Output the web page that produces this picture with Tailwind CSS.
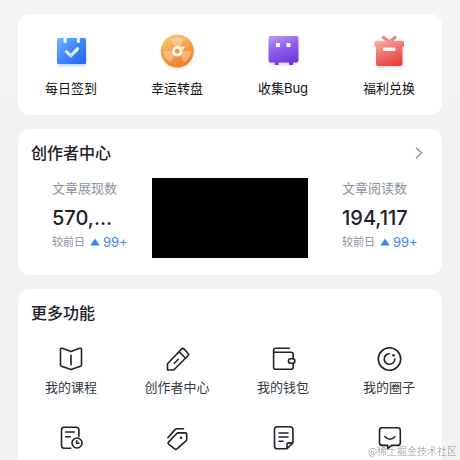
<!DOCTYPE html>
<html lang="zh-CN">
<head>
  <meta charset="UTF-8" />
  <meta name="viewport" content="width=device-width, initial-scale=1" />
  <title>我的</title>
  <!-- Tailwind -->
  <script src="https://cdn.jsdelivr.net/npm/@tailwindcss/browser@4"></script>
</head>
<body class="h-screen overflow-hidden bg-linear-to-b from-[#f5f5f6] to-[#f1f2f4] to-30% font-['Inter','Noto_Sans_CJK_SC',sans-serif] text-[#1d2129]">
<main class="flex flex-col gap-[14px] px-[18px] pt-[14px]">

  <!-- SHORTCUTS -->
  <nav class="grid grid-cols-4 rounded-xl bg-white pt-[19px] pb-[17px] text-[13px] leading-5 text-[#111]">
    <a href="#" class="flex flex-col items-center gap-[9px]">
      <svg class="size-9 overflow-visible" viewBox="0 0 36 36" fill="none">
        <defs>
          <linearGradient id="blue" x1="0" y1="0" x2="1" y2="1"><stop stop-color="#72b5fd"/><stop offset=".5" stop-color="#3f86fa"/><stop offset="1" stop-color="#2864f2"/></linearGradient>
          <linearGradient id="check" x1="0" y1="0" x2="0" y2="1"><stop stop-color="#fff"/><stop offset="1" stop-color="#c5d9ff"/></linearGradient>
          <filter id="glow" x="-30%" y="-30%" width="160%" height="160%"><feGaussianBlur stdDeviation="1.5"/></filter>
        </defs>
        <rect x="5" y="8" width="28" height="25" rx="2" fill="#5b93ff" opacity=".4" filter="url(#glow)"/>
        <rect x="4" y="5" width="29" height="26" rx="1.5" fill="url(#blue)"/>
        <rect x="10.5" y="3" width="3.3" height="7" rx="1.2" fill="#e4efff"/>
        <rect x="23.7" y="3" width="3.3" height="7" rx="1.2" fill="#e4efff"/>
        <path d="M13.5 18.8l4.3 4 6.7-7" stroke="url(#check)" stroke-width="3.2" stroke-linecap="round" stroke-linejoin="round"/>
      </svg>
      每日签到
    </a>
    <a href="#" class="flex flex-col items-center gap-[9px]">
      <svg class="size-9 overflow-visible" viewBox="0 0 36 36" fill="none">
        <defs>
          <linearGradient id="orange" x1=".3" y1="0" x2=".7" y2="1"><stop stop-color="#f8c777"/><stop offset=".5" stop-color="#f39a43"/><stop offset="1" stop-color="#ed7f2c"/></linearGradient>
        </defs>
        <circle cx="18.3" cy="20" r="15.5" fill="#f5a04e" opacity=".4" filter="url(#glow)"/>
        <circle cx="18.3" cy="18" r="16.5" fill="url(#orange)"/>
        <g fill="#fff" opacity=".32">
          <path d="M18.3 18L11.7 6.2Q18.3 2.8 24.9 6.2z"/>
          <path d="M18.3 18L11.7 6.2Q18.3 2.8 24.9 6.2z" transform="rotate(120 18.3 18)"/>
          <path d="M18.3 18L11.7 6.2Q18.3 2.8 24.9 6.2z" transform="rotate(240 18.3 18)"/>
        </g>
        <path d="M19 12.9l3 .8 4.2-.8-1.8 3.4-2 2z" fill="#fff3e2"/>
        <circle cx="18.2" cy="18.2" r="3.8" fill="#f09645" stroke="#fff3e2" stroke-width="2.8"/>
      </svg>
      幸运转盘
    </a>
    <a href="#" class="flex flex-col items-center gap-[9px]">
      <svg class="size-9 overflow-visible" viewBox="0 0 36 36" fill="none">
        <defs>
          <linearGradient id="purple" x1=".15" y1="0" x2=".5" y2="1"><stop stop-color="#b397f3"/><stop offset=".5" stop-color="#8a5ce9"/><stop offset="1" stop-color="#7138df"/></linearGradient>
        </defs>
        <rect x="5" y="8" width="27" height="24" rx="2" fill="#9a72ef" opacity=".3" filter="url(#glow)"/>
        <path d="M5.5 3H31.5a2 2 0 0 1 2 2V27.5a2 2 0 0 1-2 2H28V32H24V29.5H13.7V32H9.7V29.5H5.5a2 2 0 0 1-2-2V5a2 2 0 0 1 2-2z" fill="url(#purple)"/>
        <rect x="11" y="10" width="4" height="4" fill="#f7f2ff"/>
        <rect x="21.5" y="10" width="4" height="4" fill="#f7f2ff"/>
      </svg>
      收集Bug
    </a>
    <a href="#" class="flex flex-col items-center gap-[9px]">
      <svg class="size-9 overflow-visible" viewBox="0 0 36 36" fill="none">
        <defs>
          <linearGradient id="red" x1=".15" y1="0" x2=".6" y2="1"><stop stop-color="#f6aca5"/><stop offset=".5" stop-color="#ef6e6b"/><stop offset="1" stop-color="#e94340"/></linearGradient>
        </defs>
        <rect x="6" y="11" width="25" height="23" rx="2" fill="#f37a76" opacity=".3" filter="url(#glow)"/>
        <path d="M17 8L12.5 4.5M19.5 8L24 4.5" stroke="#f08580" stroke-width="3.4" stroke-linecap="round"/>
        <path d="M5 7.7H31.5a1.5 1.5 0 0 1 1.5 1.5V12.5a1.5 1.5 0 0 1-1.5 1.5V31a2 2 0 0 1-2 2H7a2 2 0 0 1-2-2V14a1.5 1.5 0 0 1-1.5-1.5V9.2a1.5 1.5 0 0 1 1.5-1.5z" fill="url(#red)"/>
        <rect x="12" y="14.5" width="12.5" height="3.5" rx=".5" fill="#fff4f2"/>
      </svg>
      福利兑换
    </a>
  </nav>

  <!-- CREATOR CENTER -->
  <section class="rounded-xl bg-white pt-3 pb-[17px]">
    <div class="flex items-center justify-between pr-[19px] pl-[13px]">
      <h2 class="text-base leading-6 font-medium">创作者中心</h2>
      <a href="#" aria-label="查看更多">
        <svg class="h-3 w-2" viewBox="0 0 8 12" fill="none" stroke="#8a909c" stroke-width="1.3"><path d="M1 .8L6.5 6 1 11.2"/></svg>
      </a>
    </div>
    <div class="mt-[13px] grid grid-cols-[1fr_156px_1fr]">
      <div class="pl-[34px]">
        <p class="text-[13px] leading-5 text-[#8a919f]">文章展现数</p>
        <p class="mt-1 text-xl leading-8 font-medium">570,...</p>
        <p class="flex items-center text-[11px] leading-4 text-[#8a919f]">较前日
          <svg class="mr-[3px] ml-[5px] h-2 w-[10px]" viewBox="0 0 10 8" fill="#3e82f7"><path d="M5 .5L9.8 7.5H.2z"/></svg>
          <span class="text-[13px] text-[#3e82f7]">99+</span>
        </p>
      </div>
      <div class="bg-black"></div>
      <div class="pb-2 pl-[34px]">
        <p class="text-[13px] leading-5 text-[#8a919f]">文章阅读数</p>
        <p class="mt-1 text-xl leading-8 font-medium">194,117</p>
        <p class="flex items-center text-[11px] leading-4 text-[#8a919f]">较前日
          <svg class="mr-[3px] ml-[5px] h-2 w-[10px]" viewBox="0 0 10 8" fill="#3e82f7"><path d="M5 .5L9.8 7.5H.2z"/></svg>
          <span class="text-[13px] text-[#3e82f7]">99+</span>
        </p>
      </div>
    </div>
  </section>

  <!-- MORE -->
  <section class="rounded-xl bg-white pt-3 pb-5">
    <h2 class="pl-[13px] text-base leading-6 font-medium">更多功能</h2>
    <div class="mt-[22px] grid grid-cols-4 gap-y-[29px] text-[13px] leading-5 text-[#333842]">
      <a href="#" class="flex flex-col items-center gap-[6px]">
        <svg class="size-6 overflow-visible" viewBox="0 0 24 24" fill="none" stroke="#1d2129" stroke-width="1.6" stroke-linecap="round" stroke-linejoin="round">
          <path d="M12 4.5L3.3 1.3Q1.5.8 1.5 2.5V18Q1.5 19 2.5 19.3L12 22.5l9.5-3.2Q22.5 19 22.5 18V2.5Q22.5.8 20.7 1.3zM12 8.3V17.7"/>
        </svg>
        我的课程
      </a>
      <a href="#" class="flex flex-col items-center gap-[6px]">
        <svg class="size-6 overflow-visible" viewBox="0 0 24 24" fill="none" stroke="#1d2129" stroke-width="1.6" stroke-linecap="round" stroke-linejoin="round">
          <path d="M2.5 23V16.7L16.5 2.1Q17.8.8 19.1 2.1L23 6.2Q24.2 7.5 23 8.8L8.7 23zM14.2 4.7L20.3 11M9.3 16.3l4-4"/>
        </svg>
        创作者中心
      </a>
      <a href="#" class="flex flex-col items-center gap-[6px]">
        <svg class="size-6 overflow-visible" viewBox="0 0 24 24" fill="none" stroke="#1d2129" stroke-width="1.6" stroke-linecap="round" stroke-linejoin="round">
          <path d="M18.3 1.3H4.8Q2.6 1.3 2.6 3.5V20Q2.6 22.3 4.8 22.3H20Q22.2 22.3 22.2 20V16.3M22.2 11.7V7.5Q22.2 5.3 20 5.3H2.6"/>
          <rect x="17.5" y="11.7" width="6.3" height="4.6" rx="2"/>
        </svg>
        我的钱包
      </a>
      <a href="#" class="flex flex-col items-center gap-[6px]">
        <svg class="size-6 overflow-visible" viewBox="0 0 24 24" fill="none" stroke="#1d2129" stroke-width="1.6" stroke-linecap="round">
          <circle cx="12.5" cy="12" r="11.2"/>
          <path d="M12.3 6.7A5.3 5.3 0 1 0 17.8 12"/>
          <circle cx="16.5" cy="8.3" r="1.3" fill="#1d2129" stroke="none"/>
        </svg>
        我的圈子
      </a>
      <a href="#" class="flex flex-col items-center gap-[6px]">
        <svg class="size-6 overflow-visible" viewBox="0 0 24 24" fill="none" stroke="#1d2129" stroke-width="1.6" stroke-linecap="round" stroke-linejoin="round">
          <path d="M11.7 22.3H5.2Q2.5 22.3 2.5 19.6V4Q2.5 1.3 5.2 1.3H17.2Q19.9 1.3 19.9 4V10.5M6.7 6H15.3M6.7 10.7H11.3"/>
          <circle cx="18" cy="17" r="5"/>
          <path d="M17.7 14.7V17.3H19.8"/>
        </svg>
        阅读记录
      </a>
      <a href="#" class="flex flex-col items-center gap-[6px]">
        <svg class="size-6 overflow-visible" viewBox="0 0 24 24" fill="none" stroke="#1d2129" stroke-width="1.6" stroke-linecap="round" stroke-linejoin="round">
          <path d="M2.9 11.7L10 3.6Q10.9 2.7 12 2.7H18.5"/>
          <path d="M13.3 6.9H20.5Q21.7 6.9 21.7 8.1V13.3Q21.7 14.2 21 14.8L12 22.9Q10.8 24 9.6 22.9L3.6 18.2Q2.5 17.2 3.5 16.1L11.5 7.7Q12.2 6.9 13.3 6.9z"/>
          <circle cx="16" cy="11.7" r="1.3" fill="#1d2129" stroke="none"/>
        </svg>
        标签管理
      </a>
      <a href="#" class="flex flex-col items-center gap-[6px]">
        <svg class="size-6 overflow-visible" viewBox="0 0 24 24" fill="none" stroke="#1d2129" stroke-width="1.6" stroke-linecap="round" stroke-linejoin="round">
          <path d="M16 22.8H6.2Q3.5 22.8 3.5 20.1V3.5Q3.5.8 6.2.8H19.2Q21.9.8 21.9 3.5V16.9zM16 22.8V18.5Q16 16.9 17.6 16.9H21.9M8 7H17M8 11H17M8 15.2H12"/>
        </svg>
        我的报名
      </a>
      <a href="#" class="flex flex-col items-center gap-[6px]">
        <svg class="size-6 overflow-visible" viewBox="0 0 24 24" fill="none" stroke="#1d2129" stroke-width="1.6" stroke-linecap="round" stroke-linejoin="round">
          <path d="M5 1.8H20.7Q23.3 1.8 23.3 4.4V16.8Q23.3 19.4 20.7 19.4H14.5L10.7 22.6V19.4H5Q2.5 19.4 2.5 16.8V4.4Q2.5 1.8 5 1.8zM7.9 10.7Q13 15.8 18 10.7"/>
        </svg>
        意见反馈
      </a>
    </div>
  </section>
</main>

<!-- watermark -->
<p class="fixed right-[3px] bottom-px font-['Noto_Sans_CJK_SC',sans-serif] text-[10px] leading-4 font-light text-[#8f9196]">@稀土掘金技术社区</p>
</body>
</html>
